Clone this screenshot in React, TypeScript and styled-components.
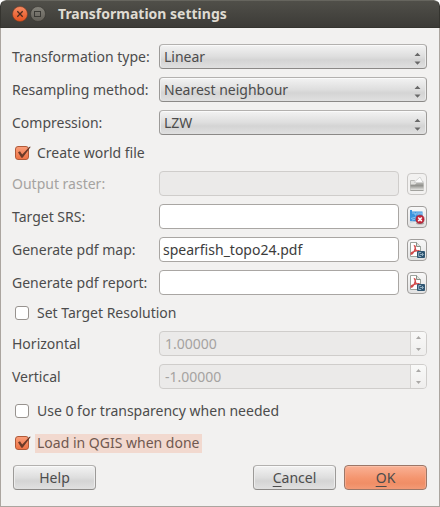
import React, { useState } from "react";
import styled, { createGlobalStyle, css } from "styled-components";

const font = `"Noto Sans", "Open Sans", sans-serif`;

const GlobalStyle = createGlobalStyle`
  *, *::before, *::after { box-sizing: border-box; }
  body { margin: 0; background: #ffffff; }
  button, input, select { font: inherit; margin: 0; }
`;

const Dialog = styled.main`
  display: flex;
  flex-direction: column;
  min-height: 100vh;
  background: #f2f1f0;
  border-radius: 6px 6px 0 0;
  overflow: hidden;
  font-family: ${font};
  font-size: 14px;
  line-height: 20px;
  color: #4c4c4c;
`;

const TitleBar = styled.header`
  display: flex;
  align-items: center;
  gap: 2px;
  height: 28px;
  padding: 0 11px;
  background: linear-gradient(#504f49, #3c3b37);
  border: 1px solid #35342f;
  border-top-color: #66655e;
  border-radius: 6px 6px 0 0;
`;

const Title = styled.h1`
  margin: 0 0 0 10px;
  font-size: 14px;
  line-height: 20px;
  font-weight: 700;
  color: #dfdbd2;
`;

const WindowButton = styled.button`
  display: flex;
  width: 16px;
  height: 16px;
  padding: 0;
  border: 0;
  background: none;
`;

const Body = styled.form`
  display: flex;
  flex: 1;
  flex-direction: column;
  gap: 12px;
  padding: 16px 12px 16px 11px;
  border: 1px solid #aba59f;
  border-top: 0;
`;

const Fields = styled.div`
  display: flex;
  flex-direction: column;
  gap: 8px;
`;

const Row = styled.div`
  display: grid;
  grid-template-columns: 139px minmax(0, 1fr);
  gap: 8px;
  align-items: center;
`;

const Label = styled.label<{ $dim?: boolean }>`
  white-space: nowrap;
  color: ${(p) => (p.$dim ? "#a5a3a1" : "#4c4c4c")};
`;

const controlBox = css`
  width: 100%;
  min-width: 0;
  height: 25px;
  border: 1px solid #a9a6a3;
  border-radius: 4px;
  outline: 0;
`;

const raised = css`
  background: linear-gradient(#f3f3f3, #dedede 50%, #d4d4d4 65%, #e0e0e0);
  border: 1px solid #9c9a98;
  border-top-color: #b3b1af;
  border-bottom-color: #8b8987;
  border-radius: 4px;
  box-shadow: inset 0 1px 0 #fafafa, inset 1px 0 0 #ececec, inset -1px 0 0 #ececec;
`;

const SelectWrap = styled.div`
  display: grid;
  align-items: center;
  > * { grid-area: 1 / 1; }
  > svg { justify-self: end; margin: 4px 6px 0 0; pointer-events: none; }
`;

const SelectBox = styled.select`
  ${controlBox}
  ${raised}
  appearance: none;
  padding: 0 20px 0 4px;
  line-height: 20px;
  color: #4c4c4c;
`;

const FieldWithTool = styled.div`
  display: flex;
  align-items: center;
  gap: 8px;
`;

const TextBox = styled.input`
  ${controlBox}
  flex: 1;
  padding: 0 3px;
  background: #ffffff;
  color: #3c3c3c;
  &:disabled {
    background: #ebeae9;
    border-color: #cfcdcb;
    color: #a5a3a1;
  }
`;

const ToolButton = styled.button`
  display: flex;
  align-items: center;
  justify-content: center;
  flex: none;
  width: 20px;
  height: 22px;
  padding: 0;
  background: linear-gradient(#f8f8f8, #e2e2e2);
  border: 1px solid #a09e9c;
  border-radius: 4px;
  &:disabled { border-color: #c9c7c5; background: #f2f1f0; }
`;

const SpinBox = styled.div`
  ${controlBox}
  display: flex;
  background: #ebeae9;
  border-color: #cfcdcb;
  overflow: hidden;
`;

const SpinInput = styled.input`
  flex: 1;
  min-width: 0;
  padding: 0 5px;
  border: 0;
  background: none;
  color: #a5a3a1;
`;

const SpinSteps = styled.div`
  display: flex;
  flex-direction: column;
  width: 16px;
  border-left: 1px solid #d5d3d1;
  background: linear-gradient(#f9f9f8, #efeeed);
`;

const Step = styled.button`
  display: flex;
  flex: 1;
  align-items: center;
  justify-content: center;
  padding: 0;
  border: 0;
  background: none;
`;

const CheckLabel = styled.label`
  display: flex;
  align-items: center;
  align-self: flex-start;
  gap: 5px;
  height: 20px;
  padding-left: 3px;
`;

const CheckMark = styled.span`
  display: grid;
  width: 15px;
  height: 16px;
  > * { grid-area: 1 / 1; }
`;

const CheckInput = styled.input`
  appearance: none;
  width: 14px;
  height: 14px;
  align-self: center;
  border: 1px solid #98938f;
  border-radius: 3px;
  background: #ffffff;
  &:checked {
    border-color: #b05a38;
    background: linear-gradient(#fa9d78, #ee7345);
  }
`;

const CheckText = styled.span<{ $active?: boolean }>`
  height: 19px;
  line-height: 18px;
  padding: 0 3px 0 2px;
  white-space: nowrap;
  background: ${(p) => (p.$active ? "#f2d9cf" : "transparent")};
  color: ${(p) => (p.$active ? "#705850" : "#4c4c4c")};
`;

const Actions = styled.footer`
  display: flex;
  gap: 8px;
  padding-left: 1px;
`;

const PushButton = styled.button<{ $primary?: boolean; $first?: boolean }>`
  ${raised}
  width: 83px;
  height: 25px;
  padding: 0;
  line-height: 20px;
  color: #4c4c4c;
  ${(p) => p.$first && "margin-right: auto;"}
  ${(p) =>
    p.$primary &&
    css`
      background: linear-gradient(#f9b195, #f4946d 55%, #f08e66 75%, #f39a76);
      border-color: #9b7768;
      box-shadow: inset 0 1px 0 #fcc0a8, inset 1px 0 0 #f6a98c, inset -1px 0 0 #f6a98c;
    `}
`;

const Mnemonic = styled.span`
  text-decoration: underline;
  text-underline-offset: 3px;
  text-decoration-skip-ink: none;
`;

function CloseGlyph() {
  return (
    <svg width="16" height="16" viewBox="0 0 16 16">
      <defs>
        <linearGradient id="closeFill" x2="0" y2="1">
          <stop stopColor="#f58b63" />
          <stop offset="1" stopColor="#e6521f" />
        </linearGradient>
      </defs>
      <circle cx="8" cy="8" r="7.5" fill="url(#closeFill)" stroke="#7d3b22" strokeWidth=".6" />
      <path d="M5.3 5.3l5.4 5.4M10.7 5.3l-5.4 5.4" stroke="#4a2a1e" strokeWidth="1.3" />
    </svg>
  );
}

function MaximizeGlyph() {
  return (
    <svg width="16" height="16" viewBox="0 0 16 16">
      <defs>
        <linearGradient id="maxFill" x2="0" y2="1">
          <stop stopColor="#85837b" />
          <stop offset="1" stopColor="#625f58" />
        </linearGradient>
      </defs>
      <circle cx="8" cy="8" r="7.5" fill="url(#maxFill)" stroke="#35342f" strokeWidth=".6" />
      <rect x="4.5" y="5.5" width="6" height="5" fill="none" stroke="#3a3935" />
    </svg>
  );
}

function Arrows() {
  return (
    <svg width="7" height="13" viewBox="0 0 7 13">
      <path d="M.5 4L3.5.7 6.5 4zM.5 9.5h6L3.5 12.8z" fill="#686868" />
    </svg>
  );
}

function FolderIcon() {
  return (
    <svg width="16" height="16" viewBox="0 0 16 16">
      <defs>
        <linearGradient id="folderFill" x2="0" y2="1">
          <stop stopColor="#b4b4b0" />
          <stop offset=".35" stopColor="#92928e" />
          <stop offset="1" stopColor="#efefec" />
        </linearGradient>
      </defs>
      <path d="M1.5 14.5V4.5h4l1 1h7.5v9z" fill="#e2e2df" stroke="#b9b9b6" />
      <path d="M5 6.5l6-5.5 3 5.5z" fill="#fbfbfb" stroke="#c9c9c7" strokeWidth=".7" />
      <path d="M1.5 8.5H6L7.5 7h7v7.5h-13z" fill="url(#folderFill)" />
      <path d="M1.5 14.5h13" stroke="#a3a39f" />
    </svg>
  );
}

function CrsIcon() {
  return (
    <svg width="16" height="16" viewBox="0 0 16 16">
      <path d="M1 1h2v1.5h10.5V11l-2 1H1z" fill="#3b94dd" />
      <path d="M3 4h3v2h1V4h6v1H9v2h4M2 9.5l5-1.5v2l-4 1" fill="none" stroke="#8fc5f0" />
      <path d="M1 13l9-1" stroke="#a9c7dd" />
      <ellipse cx="11" cy="14.3" rx="4" ry="1.2" fill="#a8a5a2" />
      <circle cx="11" cy="10.3" r="4.1" fill="#c5283b" stroke="#96182c" strokeWidth=".6" />
      <path d="M9.2 8.5l3.6 3.6M12.8 8.5l-3.6 3.6" stroke="#fff" strokeWidth="1.5" />
    </svg>
  );
}

function PdfIcon() {
  return (
    <svg width="16" height="18" viewBox="0 0 16 18">
      <path d="M1.5 1.5h6l4 4v10h-10z" fill="#fff" stroke="#9da39d" />
      <path d="M7.5 1.5v4h4" fill="#dfe3df" stroke="#879087" />
      <path d="M4.8 4.5c1.6-.2 1 2.3 1.8 4 .9 1.7 3 1.7 4 1.2M6.2 4.9c.7 3-1.6 7.2-3.4 8.2-1.2.5-1-.8.3-1.7 2-1.3 4.6-2 7.5-1.8" fill="none" stroke="#d24b4b" strokeWidth="1.3" />
      <rect x="8" y="10" width="8" height="7" rx="1" fill="#2f5672" />
      <path d="M12.2 11.5H9.7v4h2.5M11 13.5h3M13 12l1.5 1.5L13 15" fill="none" stroke="#9db8c8" strokeWidth=".9" />
    </svg>
  );
}

function SelectRow({ id, label, options }: { id: string; label: string; options: string[] }) {
  return (
    <Row>
      <Label htmlFor={id}>{label}</Label>
      <SelectWrap>
        <SelectBox id={id}>
          {options.map((o) => (
            <option key={o}>{o}</option>
          ))}
        </SelectBox>
        <Arrows />
      </SelectWrap>
    </Row>
  );
}

interface FileRowProps {
  id: string;
  label: string;
  value?: string;
  disabled?: boolean;
  action: string;
  children: React.ReactNode;
}

function FileRow({ id, label, value = "", disabled, action, children }: FileRowProps) {
  return (
    <Row>
      <Label htmlFor={id} $dim={disabled}>{label}</Label>
      <FieldWithTool>
        <TextBox id={id} type="text" defaultValue={value} disabled={disabled} />
        <ToolButton type="button" aria-label={action} disabled={disabled}>{children}</ToolButton>
      </FieldWithTool>
    </Row>
  );
}

function SpinRow({ id, label, value }: { id: string; label: string; value: string }) {
  return (
    <Row>
      <Label htmlFor={id}>{label}</Label>
      <SpinBox>
        <SpinInput id={id} type="text" defaultValue={value} disabled />
        <SpinSteps>
          <Step type="button" disabled aria-label={`Increase ${label}`}>
            <svg width="5" height="3" viewBox="0 0 5 3"><path d="M0 3L2.5 0 5 3z" fill="#aaa8a6" /></svg>
          </Step>
          <Step type="button" disabled aria-label={`Decrease ${label}`}>
            <svg width="5" height="3" viewBox="0 0 5 3"><path d="M0 0h5L2.5 3z" fill="#aaa8a6" /></svg>
          </Step>
        </SpinSteps>
      </SpinBox>
    </Row>
  );
}

function Check({ label, initial, active }: { label: string; initial?: boolean; active?: boolean }) {
  const [checked, setChecked] = useState(!!initial);
  return (
    <CheckLabel>
      <CheckMark>
        <CheckInput type="checkbox" checked={checked} onChange={(e) => setChecked(e.target.checked)} />
        {checked && (
          <svg width="16" height="16" viewBox="0 0 16 16" pointerEvents="none">
            <path d="M3 7.3l2-1 2.2 3.2L14.5 1.8h1.3L7.6 12.8H6.4z" fill="#6b3a28" />
          </svg>
        )}
      </CheckMark>
      <CheckText $active={active}>{label}</CheckText>
    </CheckLabel>
  );
}

export default function App() {
  return (
    <>
      <GlobalStyle />
      <Dialog>
        <TitleBar>
          <WindowButton type="button" aria-label="Close"><CloseGlyph /></WindowButton>
          <WindowButton type="button" aria-label="Maximize"><MaximizeGlyph /></WindowButton>
          <Title>Transformation settings</Title>
        </TitleBar>
        <Body onSubmit={(e) => e.preventDefault()}>
          <Fields>
            <SelectRow id="type" label="Transformation type:" options={["Linear"]} />
            <SelectRow id="resampling" label="Resampling method:" options={["Nearest neighbour"]} />
            <SelectRow id="compression" label="Compression:" options={["LZW"]} />
            <Check label="Create world file" initial />
            <FileRow id="raster" label="Output raster:" action="Choose output raster" disabled><FolderIcon /></FileRow>
            <FileRow id="srs" label="Target SRS:" action="Choose target SRS"><CrsIcon /></FileRow>
            <FileRow id="map" label="Generate pdf map:" value="spearfish_topo24.pdf" action="Choose pdf map"><PdfIcon /></FileRow>
            <FileRow id="report" label="Generate pdf report:" action="Choose pdf report"><PdfIcon /></FileRow>
            <Check label="Set Target Resolution" />
            <SpinRow id="horizontal" label="Horizontal" value="1.00000" />
            <SpinRow id="vertical" label="Vertical" value="-1.00000" />
          </Fields>
          <Check label="Use 0 for transparency when needed" />
          <Check label="Load in QGIS when done" initial active />
          <Actions>
            <PushButton type="button" $first>Help</PushButton>
            <PushButton type="button"><Mnemonic>C</Mnemonic>ancel</PushButton>
            <PushButton type="submit" $primary><Mnemonic>O</Mnemonic>K</PushButton>
          </Actions>
        </Body>
      </Dialog>
    </>
  );
}
